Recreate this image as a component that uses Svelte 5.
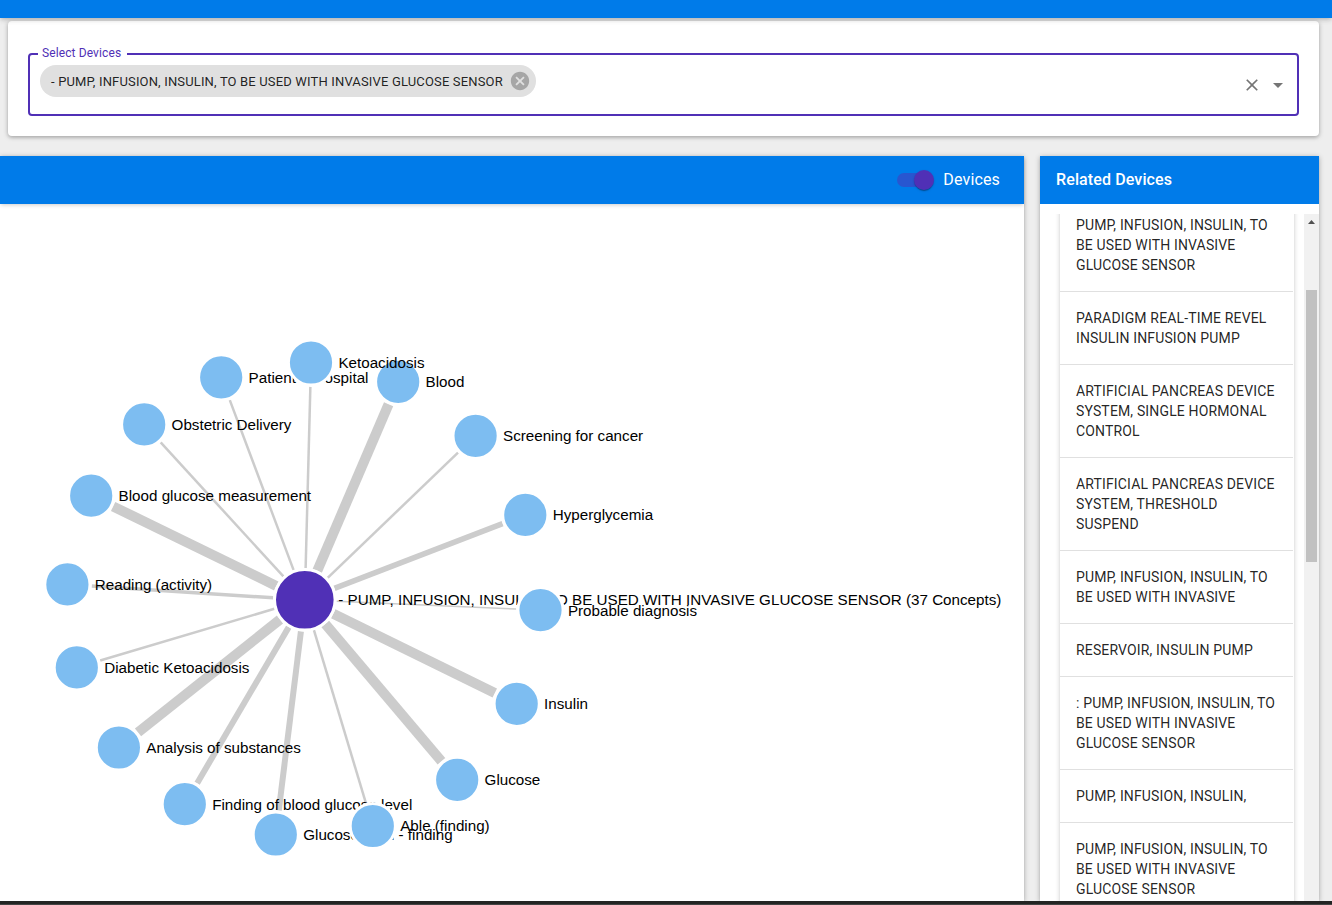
<script>
  const hub = { x: 304.8, y: 599.8, label: '- PUMP, INFUSION, INSULIN, TO BE USED WITH INVASIVE GLUCOSE SENSOR (37 Concepts)' };
  const nodes = [
    { x: 398.2, y: 381.8, w: 10, label: 'Blood' },
    { x: 221.2, y: 377.3, w: 2.5, label: 'Patient in hospital' },
    { x: 311, y: 362.5, w: 2.5, label: 'Ketoacidosis' },
    { x: 144.2, y: 424.4, w: 2.5, label: 'Obstetric Delivery' },
    { x: 475.6, y: 435.8, w: 2.5, label: 'Screening for cancer' },
    { x: 91.2, y: 495.7, w: 10, label: 'Blood glucose measurement' },
    { x: 525.3, y: 514.9, w: 5.5, label: 'Hyperglycemia' },
    { x: 67.4, y: 584.4, w: 3.5, label: 'Reading (activity)' },
    { x: 540.5, y: 610.1, w: 1.5, label: 'Probable diagnosis' },
    { x: 76.8, y: 667.4, w: 2.5, label: 'Diabetic Ketoacidosis' },
    { x: 516.7, y: 703.8, w: 10, label: 'Insulin' },
    { x: 118.9, y: 747.5, w: 10, label: 'Analysis of substances' },
    { x: 457.2, y: 779.8, w: 10, label: 'Glucose' },
    { x: 184.8, y: 804.2, w: 6, label: 'Finding of blood glucose level' },
    { x: 275.8, y: 834.5, w: 6, label: 'Glucose level - finding' },
    { x: 372.8, y: 826, w: 2.5, label: 'Able (finding)' }
  ];
  const edges = nodes.map((n) => {
    const dx = n.x - hub.x, dy = n.y - hub.y, d = Math.hypot(dx, dy);
    return {
      w: n.w,
      x1: hub.x + (dx / d) * 31.7, y1: hub.y + (dy / d) * 31.7,
      x2: n.x - (dx / d) * 24.4, y2: n.y - (dy / d) * 24.4
    };
  });
  const devices = [
    ['PUMP, INFUSION, INSULIN, TO', 'BE USED WITH INVASIVE', 'GLUCOSE SENSOR'],
    ['PARADIGM REAL-TIME REVEL', 'INSULIN INFUSION PUMP'],
    ['ARTIFICIAL PANCREAS DEVICE', 'SYSTEM, SINGLE HORMONAL', 'CONTROL'],
    ['ARTIFICIAL PANCREAS DEVICE', 'SYSTEM, THRESHOLD', 'SUSPEND'],
    ['PUMP, INFUSION, INSULIN, TO', 'BE USED WITH INVASIVE'],
    ['RESERVOIR, INSULIN PUMP'],
    [': PUMP, INFUSION, INSULIN, TO', 'BE USED WITH INVASIVE', 'GLUCOSE SENSOR'],
    ['PUMP, INFUSION, INSULIN,'],
    ['PUMP, INFUSION, INSULIN, TO', 'BE USED WITH INVASIVE', 'GLUCOSE SENSOR']
  ];
</script>

<div class="page">
  <header class="appbar"></header>
  <section class="search">
    <div class="field">
      <span class="label">Select Devices</span>
      <div class="chip">
        <span>- PUMP, INFUSION, INSULIN, TO BE USED WITH INVASIVE GLUCOSE SENSOR</span>
        <svg width="22" height="22" viewBox="0 0 24 24"><path fill="#a6a6a6" d="M12 2C6.47 2 2 6.47 2 12s4.47 10 10 10 10-4.47 10-10S17.53 2 12 2zm5 13.59L15.59 17 12 13.41 8.41 17 7 15.59 10.59 12 7 8.41 8.41 7 12 10.59 15.59 7 17 8.41 13.41 12 17 15.59z" /></svg>
      </div>
      <div class="controls">
        <svg width="20" height="20" viewBox="0 0 24 24"><path d="M19 6.41L17.59 5 12 10.59 6.41 5 5 6.41 10.59 12 5 17.59 6.41 19 12 13.41 17.59 19 19 17.59 13.41 12z" /></svg>
        <svg width="24" height="24" viewBox="0 0 24 24"><path d="M7 10l5 5 5-5z" /></svg>
      </div>
    </div>
  </section>
  <main class="content">
    <section class="panel graph">
      <div class="head right">
        <span class="switch"><i></i></span>
        <span class="toggle-text">Devices</span>
      </div>
      <svg class="canvas" width="1024" height="697" viewBox="0 204 1024 697">
        {#each edges as e}
          <line x1={e.x1} y1={e.y1} x2={e.x2} y2={e.y2} stroke="#ccc" stroke-width={e.w} />
        {/each}
        <circle class="hub" cx={hub.x} cy={hub.y} r="30.3" />
        <text x={hub.x + 33.5} y={hub.y + 5.2}>{hub.label}</text>
        {#each nodes as n}
          <circle class="node" cx={n.x} cy={n.y} r="22.6" />
          <text x={n.x + 27.4} y={n.y + 5.4}>{n.label}</text>
        {/each}
      </svg>
    </section>
    <section class="panel related">
      <div class="head title">Related Devices</div>
      <div class="scroller">
        <div class="list">
          {#each devices as lines}
            <div class="item">{#each lines as l}<div>{l}</div>{/each}</div>
          {/each}
        </div>
        <div class="scrollbar">
          <svg width="15" height="15" viewBox="0 0 15 15"><path fill="#505050" d="M4 10l3.5-4L11 10z" /></svg>
          <div class="thumb"></div>
        </div>
      </div>
    </section>
  </main>
  <footer></footer>
</div>

<style>
  :global(body) { margin: 0; overflow: hidden; }
  .page { width: 1332px; height: 905px; background: #eee; display: flex; flex-direction: column; overflow: hidden; font-family: Roboto, sans-serif; color: rgba(0, 0, 0, .87); }
  .appbar { flex: none; height: 18px; background: #007be9; z-index: 3; position: relative; box-shadow: 0 2px 4px -1px rgba(0,0,0,.2), 0 4px 5px rgba(0,0,0,.04), 0 1px 10px rgba(0,0,0,.04); }
  .search { flex: none; box-sizing: border-box; height: 115px; margin: 3px 13px 0 8px; padding: 32px 20px 20px; background: #fff; border-radius: 4px; box-shadow: 0 1px 5px rgba(0,0,0,.28), 0 2px 3px rgba(0,0,0,.08); }
  .field { position: relative; box-sizing: border-box; height: 63px; border: 2px solid #5030b6; border-radius: 4px; display: flex; justify-content: space-between; padding: 10px 7px 0 10px; }
  .label { position: absolute; left: 8px; top: -9px; height: 14px; line-height: 15px; padding: 0 6px 0 4px; width: 79px; background: #fff; color: #5030b6; font-size: 12px; letter-spacing: .11px; white-space: nowrap; }
  .chip { box-sizing: border-box; height: 32px; width: 496px; border-radius: 16px; background: #e0e0e0; display: flex; align-items: center; justify-content: space-between; padding: 0 5px 0 11px; font-size: 13px; letter-spacing: .155px; white-space: nowrap; }
  .controls { height: 40px; display: flex; align-items: center; gap: 4px; }
  .controls path { fill: #757575; }
  .content { display: flex; gap: 16px; margin-top: 20px; height: 745px; }
  .panel { background: #fff; height: 745px; box-shadow: 0 1px 5px rgba(0,0,0,.3), 0 1px 1px rgba(0,0,0,.1); }
  .graph { width: 1024px; }
  .related { width: 279px; }
  .head { box-sizing: border-box; height: 48px; padding-bottom: 2px; background: #007be9; color: #fff; display: flex; align-items: center; font-size: 16px; letter-spacing: .15px; }
  .right { justify-content: flex-end; padding-right: 24px; position: relative; box-shadow: 0 2px 4px -1px rgba(0,0,0,.2); }
  .title { padding-left: 16px; font-weight: 500; letter-spacing: .12px; }
  .switch { width: 34px; height: 14px; border-radius: 7px; background: #2856d0; position: relative; margin: 2px 12px 0 0; }
  .switch i { position: absolute; left: 17px; top: -3px; width: 20px; height: 20px; border-radius: 50%; background: #5030b6; box-shadow: 0 2px 1px -1px rgba(0,0,0,.2), 0 1px 1px rgba(0,0,0,.14), 0 1px 3px rgba(0,0,0,.12); }
  .canvas { display: block; }
  .canvas text { font: 15.2px "Liberation Sans", Arial, sans-serif; fill: #000; }
  circle { stroke: #fff; stroke-width: 3px; }
  .hub { fill: #5030b6; }
  .node { fill: #7dbdf1; }
  .scroller { display: flex; margin-top: 10px; height: 687px; overflow: hidden; padding-left: 10px; justify-content: space-between; }
  .list { width: 234px; margin: -15px 0 0 10px; height: 760px; border-radius: 4px; box-shadow: 0 2px 1px -1px rgba(0,0,0,.2), 0 1px 1px rgba(0,0,0,.14), 0 1px 5px rgba(0,0,0,.2); }
  .item { padding: 16px 0 16px 16px; margin-right: 1px; font-size: 14px; line-height: 20px; letter-spacing: .15px; white-space: nowrap; border-bottom: 1px solid #e0e0e0; }
  .scrollbar { width: 15px; background: #f1f1f1; }
  .scrollbar svg { display: block; }
  .thumb { width: 11px; height: 272px; margin: 61px 0 0 2px; background: #c1c1c1; }
  footer { height: 3px; background: #232423; border-bottom: 1px solid #444; z-index: 2; position: relative; }
</style>
